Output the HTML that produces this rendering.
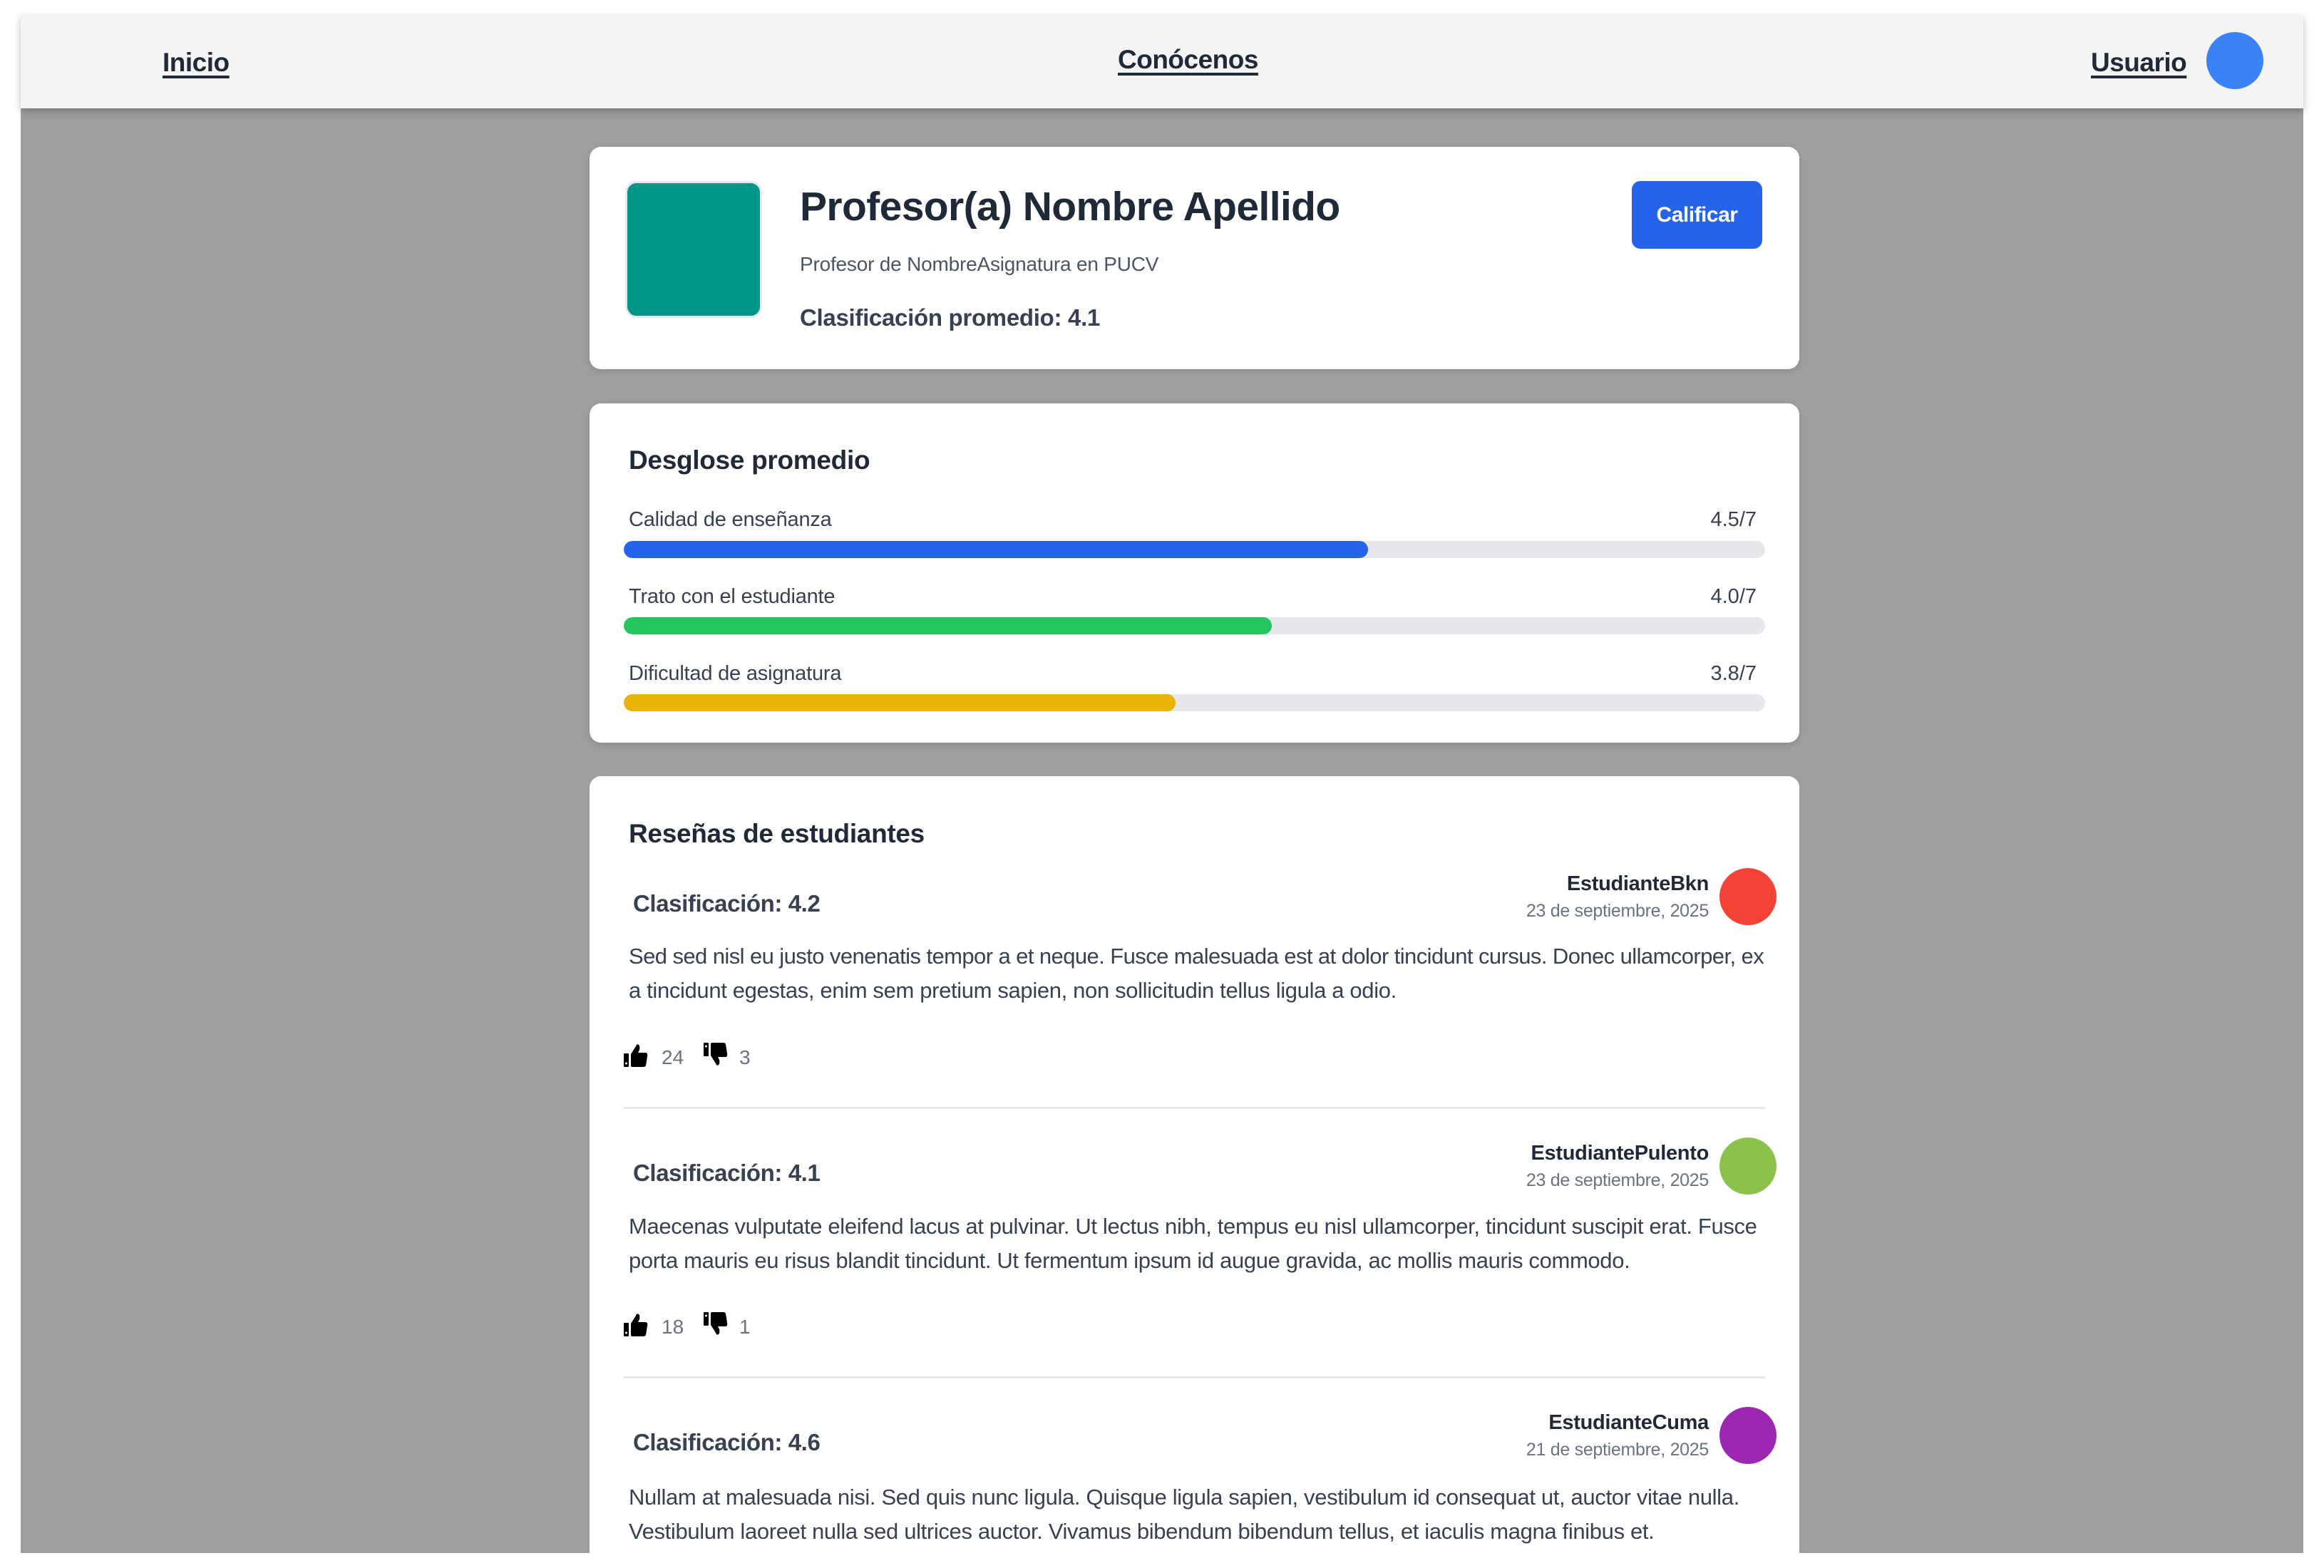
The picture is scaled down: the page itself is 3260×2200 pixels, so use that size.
<!DOCTYPE html>
<html><head><meta charset="utf-8"><style>
*{margin:0;padding:0;box-sizing:border-box}
body{width:3260px;height:2200px;background:#fff;position:relative;overflow:hidden;font-family:"Liberation Sans",sans-serif;color:#1f2937}
.a{position:absolute;white-space:nowrap}
#bg{left:29px;top:21px;width:3202px;height:2158px;background:#9e9e9e;overflow:hidden}
#nav{left:29px;top:21px;width:3202px;height:131px;background:#f4f4f4;box-shadow:0 4px 10px rgba(0,0,0,.25)}
.nl{font-size:37px;font-weight:bold;text-decoration:underline;text-decoration-thickness:4px;text-underline-offset:6px;letter-spacing:-0.5px;color:#1f2937}
.card{position:absolute;left:827px;width:1697px;background:#fff;border-radius:16px;box-shadow:0 3px 8px rgba(0,0,0,.12)}
.bar{position:absolute;left:875px;width:1601px;height:24px;border-radius:12px;background:#e5e7eb;overflow:hidden}
.bar div{height:100%;border-radius:12px}
.lab{font-size:29px;color:#374151;letter-spacing:-0.2px}
.val{font-size:29px;color:#374151;right:796px}
.rc{font-size:33px;font-weight:bold;color:#374151;left:888px;letter-spacing:-0.4px}
.nm{font-size:29px;font-weight:bold;right:863px;text-align:right;letter-spacing:-0.3px}
.dt{font-size:25px;color:#6b7280;right:863px;text-align:right;letter-spacing:-0.3px}
.av{position:absolute;left:2412px;width:80px;height:80px;border-radius:50%}
.p{font-size:31px;color:#374151;left:882px;letter-spacing:-0.35px}
.cnt{font-size:28px;color:#6b7280}
.hr{position:absolute;left:875px;width:1601px;height:3px;background:#e5e7eb}
</style></head><body>
<div class="a" id="bg"></div>
<div class="a" id="nav"></div>
<div class="a nl" style="left:228px;top:67px">Inicio</div>
<div class="a nl" style="left:1568px;top:63px">Conócenos</div>
<div class="a nl" style="left:2933px;top:67px">Usuario</div>
<div class="a" style="left:3095px;top:45px;width:80px;height:80px;border-radius:50%;background:#3b82f6"></div>

<div class="card" style="top:206px;height:312px"></div>
<div class="a" style="left:877px;top:254px;width:192px;height:192px;border-radius:16px;background:#009688;border:3px solid #e5e7eb"></div>
<div class="a" style="left:1122px;top:257px;font-size:57px;font-weight:bold;letter-spacing:-0.6px">Profesor(a) Nombre Apellido</div>
<div class="a" style="left:1122px;top:355px;font-size:28px;color:#4b5563;letter-spacing:-0.2px">Profesor de NombreAsignatura en PUCV</div>
<div class="a" style="left:1122px;top:427px;font-size:33px;font-weight:bold;color:#374151;letter-spacing:-0.3px">Clasificación promedio: 4.1</div>
<div class="a" style="left:2289px;top:254px;width:183px;height:95px;border-radius:12px;background:#2563eb;color:#fff;font-size:30px;font-weight:bold;text-align:center;line-height:95px;letter-spacing:-0.5px">Calificar</div>

<div class="card" style="top:566px;height:476px"></div>
<div class="a" style="left:882px;top:625px;font-size:37px;font-weight:bold;letter-spacing:-0.3px">Desglose promedio</div>
<div class="a lab" style="left:882px;top:713px">Calidad de enseñanza</div>
<div class="a val" style="top:713px">4.5/7</div>
<div class="bar" style="top:759px"><div style="width:1044px;background:#2563eb"></div></div>
<div class="a lab" style="left:882px;top:821px">Trato con el estudiante</div>
<div class="a val" style="top:821px">4.0/7</div>
<div class="bar" style="top:866px"><div style="width:909px;background:#22c55e"></div></div>
<div class="a lab" style="left:882px;top:929px">Dificultad de asignatura</div>
<div class="a val" style="top:929px">3.8/7</div>
<div class="bar" style="top:974px"><div style="width:774px;background:#eab308"></div></div>

<div class="card" style="top:1089px;height:1090px;border-radius:16px 16px 0 0;box-shadow:none"></div>
<div class="a" style="left:882px;top:1149px;font-size:37px;font-weight:bold;letter-spacing:-0.3px">Reseñas de estudiantes</div>

<!-- review 1 -->
<div class="a rc" style="top:1249px">Clasificación: 4.2</div>
<div class="a nm" style="top:1224px">EstudianteBkn</div>
<div class="a dt" style="top:1264px">23 de septiembre, 2025</div>
<div class="av" style="top:1218px;background:#f44336"></div>
<div class="a p" style="top:1324px;letter-spacing:-0.58px">Sed sed nisl eu justo venenatis tempor a et neque. Fusce malesuada est at dolor tincidunt cursus. Donec ullamcorper, ex</div>
<div class="a p" style="top:1372px">a tincidunt egestas, enim sem pretium sapien, non sollicitudin tellus ligula a odio.</div>
<svg class="a" style="left:874px;top:1464px" width="36" height="34" viewBox="0 0 36 34"><rect x="1" y="14" width="7" height="19" rx="1"/><circle cx="4.5" cy="28" r="1.5" fill="#fff"/><path d="M11 15 L18 4 Q19 0 22 2 Q24 4 23 9 L21 13 L32 13 Q35 14 34 18 L32 31 Q31 33 28 33 L13 33 Q11 33 11 31 Z"/></svg>
<div class="a cnt" style="left:928px;top:1468px">24</div>
<svg class="a" style="left:986px;top:1462px" width="36" height="34" viewBox="0 0 36 34"><rect x="1" y="1" width="7" height="19" rx="1"/><circle cx="4.5" cy="6" r="1.5" fill="#fff"/><path d="M11 19 L18 30 Q19 34 22 32 Q24 30 23 25 L21 21 L32 21 Q35 20 34 16 L32 3 Q31 1 28 1 L13 1 Q11 1 11 3 Z"/></svg>
<div class="a cnt" style="left:1037px;top:1468px">3</div>
<div class="hr" style="top:1553px"></div>

<!-- review 2 -->
<div class="a rc" style="top:1627px">Clasificación: 4.1</div>
<div class="a nm" style="top:1602px">EstudiantePulento</div>
<div class="a dt" style="top:1642px">23 de septiembre, 2025</div>
<div class="av" style="top:1596px;background:#8bc34a"></div>
<div class="a p" style="top:1703px">Maecenas vulputate eleifend lacus at pulvinar. Ut lectus nibh, tempus eu nisl ullamcorper, tincidunt suscipit erat. Fusce</div>
<div class="a p" style="top:1751px">porta mauris eu risus blandit tincidunt. Ut fermentum ipsum id augue gravida, ac mollis mauris commodo.</div>
<svg class="a" style="left:874px;top:1842px" width="36" height="34" viewBox="0 0 36 34"><rect x="1" y="14" width="7" height="19" rx="1"/><circle cx="4.5" cy="28" r="1.5" fill="#fff"/><path d="M11 15 L18 4 Q19 0 22 2 Q24 4 23 9 L21 13 L32 13 Q35 14 34 18 L32 31 Q31 33 28 33 L13 33 Q11 33 11 31 Z"/></svg>
<div class="a cnt" style="left:928px;top:1846px">18</div>
<svg class="a" style="left:986px;top:1840px" width="36" height="34" viewBox="0 0 36 34"><rect x="1" y="1" width="7" height="19" rx="1"/><circle cx="4.5" cy="6" r="1.5" fill="#fff"/><path d="M11 19 L18 30 Q19 34 22 32 Q24 30 23 25 L21 21 L32 21 Q35 20 34 16 L32 3 Q31 1 28 1 L13 1 Q11 1 11 3 Z"/></svg>
<div class="a cnt" style="left:1037px;top:1846px">1</div>
<div class="hr" style="top:1931px"></div>

<!-- review 3 -->
<div class="a rc" style="top:2005px">Clasificación: 4.6</div>
<div class="a nm" style="top:1980px">EstudianteCuma</div>
<div class="a dt" style="top:2020px">21 de septiembre, 2025</div>
<div class="av" style="top:1974px;background:#9c27b0"></div>
<div class="a p" style="top:2083px">Nullam at malesuada nisi. Sed quis nunc ligula. Quisque ligula sapien, vestibulum id consequat ut, auctor vitae nulla.</div>
<div class="a p" style="top:2131px">Vestibulum laoreet nulla sed ultrices auctor. Vivamus bibendum bibendum tellus, et iaculis magna finibus et.</div>

<div class="a" style="left:0;top:2179px;width:3260px;height:21px;background:#fff"></div>
</body></html>
